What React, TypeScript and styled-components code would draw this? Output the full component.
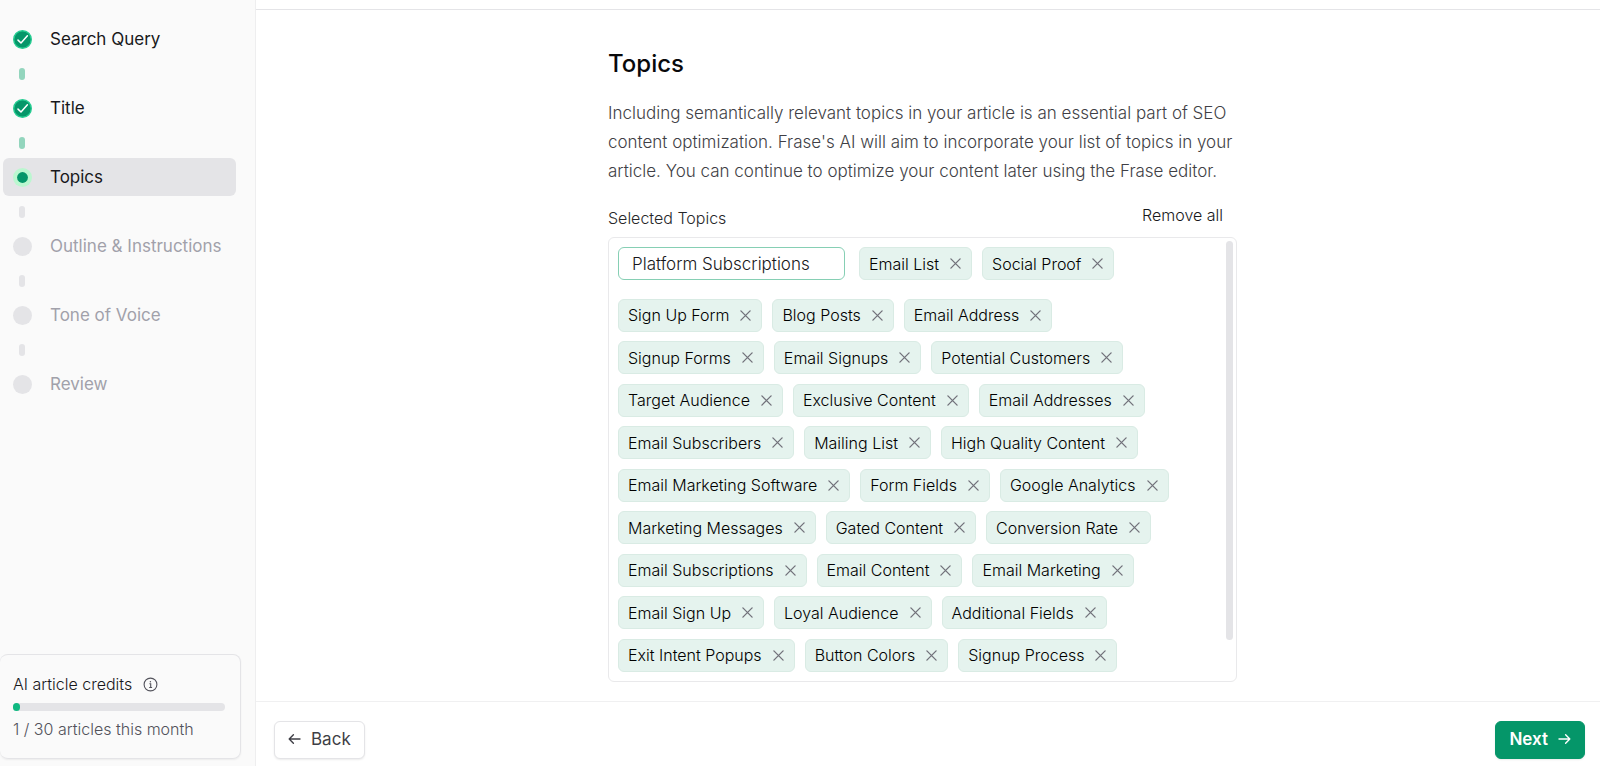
import React from "react";
import styled, { createGlobalStyle } from "styled-components";

const GlobalStyle = createGlobalStyle`
  *, *::before, *::after { box-sizing: border-box; }
  body {
    margin: 0;
    background: #ffffff;
    color: #18181b;
    font-family: Inter, "Liberation Sans", sans-serif;
    font-size: 17px;
    line-height: 24px;
  }
  button, input { font: inherit; color: inherit; }
`;

const Layout = styled.div`
  display: grid;
  grid-template-columns: 256px minmax(0, 1fr);
  min-height: 100vh;
`;

const Sidebar = styled.aside`
  display: flex;
  flex-direction: column;
  justify-content: space-between;
  padding: 20px 14px 7px 0;
  background: #fafafa;
  border-right: 1px solid #eeeeef;
`;

const Steps = styled.ol`
  list-style: none;
  margin: 0;
  padding: 0 5px 0 3px;
`;

type StepState = "done" | "current" | "upcoming";

const Step = styled.li<{ $reached: boolean }>`
  &:not(:first-child)::before {
    content: "";
    display: block;
    width: 6px;
    height: 12px;
    margin: 10px 0 9px 16px;
    border-radius: 3px;
    background: ${(p) => (p.$reached ? "#93d5bd" : "#e4e4e7")};
  }
`;

const StepLink = styled.a<{ $state: StepState }>`
  display: flex;
  align-items: center;
  gap: 18px;
  height: 38px;
  padding-left: 10px;
  border-radius: 6px;
  text-decoration: none;
  color: ${(p) => (p.$state === "upcoming" ? "#a1a1aa" : "#18181b")};
  background: ${(p) => (p.$state === "current" ? "#e4e4e7" : "transparent")};
`;

const StepIcon = styled.svg`
  width: 19px;
  height: 19px;
  flex: none;
`;

const CreditsCard = styled.section`
  padding: 17px 15px 17px 13px;
  border: 1px solid #e4e4e7;
  border-left: 0;
  border-radius: 8px;
  box-shadow: 0 1px 2px rgba(0, 0, 0, 0.06);
  font-size: 16px;
  font-weight: 300;
`;

const CreditsTitle = styled.h2`
  display: flex;
  align-items: center;
  gap: 11px;
  margin: 0;
  font-size: 16px;
  font-weight: 300;
  color: #18181b;
`;

const Track = styled.div`
  height: 8px;
  margin: 7px 0 6px;
  border-radius: 4px;
  background: #e4e4e7;
`;

const TrackFill = styled.div`
  width: 7px;
  height: 8px;
  border-radius: 4px;
  background: #10b981;
`;

const CreditsNote = styled.p`
  margin: 0;
  color: #52525b;
`;

const Main = styled.main`
  display: flex;
  flex-direction: column;
`;

const TopBar = styled.header`
  height: 10px;
  border-bottom: 1px solid #e4e4e7;
`;

const Content = styled.section`
  width: 100%;
  max-width: 629px;
  margin: 0 auto;
  padding-top: 38px;
`;

const ContentArea = styled.div`
  flex: 1;
  padding: 0 11px 19px 0;
`;

const Heading = styled.h1`
  margin: 0;
  font-size: 24px;
  line-height: 32px;
  font-weight: 500;
  color: #09090b;
`;

const Description = styled.p`
  margin: 19px 0 0;
  line-height: 29px;
  font-weight: 300;
  color: #3f3f46;
`;

const ListHeader = styled.div`
  display: flex;
  justify-content: space-between;
  margin-top: 17px;
  padding-right: 14px;
  font-size: 16px;
  line-height: 24px;
  font-weight: 300;
`;

const ListLabel = styled.label`
  padding-top: 3px;
  color: #27272a;
`;

const TextButton = styled.button`
  align-self: flex-start;
  padding: 0;
  border: 0;
  background: none;
  color: #18181b;
`;

const TopicBox = styled.div`
  position: relative;
  height: 445px;
  margin-top: 7px;
  padding: 9px 50px 9px 9px;
  border: 1px solid #e9e9eb;
  border-radius: 6px;
`;

const TopicList = styled.ul`
  display: flex;
  flex-wrap: wrap;
  align-content: space-between;
  column-gap: 10px;
  height: 100%;
  margin: 0;
  padding: 0;
  list-style: none;
`;

const EditingItem = styled.li`
  margin: 0 4px 9px 0;
`;

const TopicInput = styled.input`
  display: block;
  width: 227px;
  height: 33px;
  padding: 0 13px;
  border: 1px solid #86cfb4;
  border-radius: 6px;
  background: #ffffff;
  outline: 0;
  font-weight: 300;
  color: #18181b;
`;

const Chip = styled.li`
  display: flex;
  align-items: center;
  gap: 11px;
  height: 33px;
  padding: 0 10px 0 9px;
  border: 1px solid #d9ebe4;
  border-radius: 6px;
  background: #e5f3ee;
  font-size: 16px;
  font-weight: 300;
  color: #000000;
  white-space: nowrap;
`;

const RemoveButton = styled.button`
  display: flex;
  padding: 0;
  border: 0;
  background: none;
  color: #71717a;
`;

const ScrollThumb = styled.div`
  position: absolute;
  top: 3px;
  right: 3px;
  width: 7px;
  height: 399px;
  border-radius: 4px;
  background: #e4e4e7;
`;

const Footer = styled.footer`
  display: flex;
  justify-content: space-between;
  padding: 19px 15px 7px 18px;
  border-top: 1px solid #f0f0f1;
`;

const NavButton = styled.button<{ $primary?: boolean }>`
  display: flex;
  align-items: center;
  gap: 10px;
  height: 38px;
  padding: 0 13px 2px;
  border: 1px solid ${(p) => (p.$primary ? "#059669" : "#e4e4e7")};
  border-radius: 6px;
  background: ${(p) => (p.$primary ? "#059669" : "#ffffff")};
  color: ${(p) => (p.$primary ? "#ffffff" : "#3f3f46")};
  font-weight: ${(p) => (p.$primary ? 600 : 400)};
  box-shadow: 0 1px 2px rgba(0, 0, 0, 0.08);
`;

const steps: { label: string; state: StepState }[] = [
  { label: "Search Query", state: "done" },
  { label: "Title", state: "done" },
  { label: "Topics", state: "current" },
  { label: "Outline & Instructions", state: "upcoming" },
  { label: "Tone of Voice", state: "upcoming" },
  { label: "Review", state: "upcoming" },
];

const topics = [
  "Email List", "Social Proof",
  "Sign Up Form", "Blog Posts", "Email Address",
  "Signup Forms", "Email Signups", "Potential Customers",
  "Target Audience", "Exclusive Content", "Email Addresses",
  "Email Subscribers", "Mailing List", "High Quality Content",
  "Email Marketing Software", "Form Fields", "Google Analytics",
  "Marketing Messages", "Gated Content", "Conversion Rate",
  "Email Subscriptions", "Email Content", "Email Marketing",
  "Email Sign Up", "Loyal Audience", "Additional Fields",
  "Exit Intent Popups", "Button Colors", "Signup Process",
];

function StepMarker({ state }: { state: StepState }) {
  return (
    <StepIcon viewBox="0 0 19 19" aria-hidden="true">
      {state === "done" && (
        <>
          <circle cx="9.5" cy="9.5" r="8.8" fill="#059669" stroke="#26cd92" strokeWidth="1.4" />
          <path d="M5 10.1 8 13 14.4 5.8" fill="none" stroke="#fff" strokeWidth="1.5" strokeLinecap="round" strokeLinejoin="round" />
        </>
      )}
      {state === "current" && (
        <>
          <circle cx="9.5" cy="9.5" r="9.5" fill="#bbf7d0" />
          <circle cx="9.5" cy="9.5" r="5.4" fill="#059669" />
        </>
      )}
      {state === "upcoming" && <circle cx="9.5" cy="9.5" r="9.5" fill="#e4e4e7" />}
    </StepIcon>
  );
}

function InfoIcon() {
  return (
    <svg width="15" height="15" viewBox="0 0 15 15" fill="none" stroke="#52525b" strokeWidth="1.1" aria-hidden="true">
      <circle cx="7.5" cy="7.5" r="6.4" />
      <path d="M6.4 6.8h1.3v3.6M6.2 10.5h2.9" />
      <circle cx="7.4" cy="4.7" r=".7" fill="#52525b" stroke="none" />
    </svg>
  );
}

function CrossIcon() {
  return (
    <svg width="11" height="11" viewBox="0 0 11 11" fill="none" stroke="currentColor" strokeWidth="1.3" strokeLinecap="round" aria-hidden="true">
      <path d="M.9.9l9.2 9.2M10.1.9.9 10.1" />
    </svg>
  );
}

function ArrowIcon({ left }: { left?: boolean }) {
  return (
    <svg width="13" height="12" viewBox="0 0 13 12" fill="none" stroke="currentColor" strokeWidth="1.4" strokeLinecap="round" strokeLinejoin="round" aria-hidden="true">
      <path d={left ? "M12 6H1.2M5.4 1.8 1.2 6l4.2 4.2" : "M1 6h10.8M7.6 1.8 11.8 6l-4.2 4.2"} />
    </svg>
  );
}

export default function App() {
  return (
    <>
      <GlobalStyle />
      <Layout>
        <Sidebar>
          <nav aria-label="Article steps">
            <Steps>
              {steps.map((step, i) => (
                <Step key={step.label} $reached={step.state !== "upcoming"}>
                  <StepLink href={`#step-${i + 1}`} $state={step.state} aria-current={step.state === "current" ? "step" : undefined}>
                    <StepMarker state={step.state} />
                    {step.label}
                  </StepLink>
                </Step>
              ))}
            </Steps>
          </nav>
          <CreditsCard>
            <CreditsTitle>
              AI article credits <InfoIcon />
            </CreditsTitle>
            <Track>
              <TrackFill />
            </Track>
            <CreditsNote>1 / 30 articles this month</CreditsNote>
          </CreditsCard>
        </Sidebar>
        <Main>
          <TopBar />
          <ContentArea>
            <Content>
              <Heading>Topics</Heading>
              <Description>
                Including semantically relevant topics in your article is an essential part of SEO content optimization. Frase's
                AI will aim to incorporate your list of topics in your article. You can continue to optimize your content later
                using the Frase editor.
              </Description>
              <ListHeader>
                <ListLabel htmlFor="topic">Selected Topics</ListLabel>
                <TextButton type="button">Remove all</TextButton>
              </ListHeader>
              <TopicBox>
                <TopicList>
                  <EditingItem>
                    <TopicInput id="topic" type="text" defaultValue="Platform Subscriptions" />
                  </EditingItem>
                  {topics.map((topic) => (
                    <Chip key={topic}>
                      {topic}
                      <RemoveButton type="button" aria-label={`Remove ${topic}`}>
                        <CrossIcon />
                      </RemoveButton>
                    </Chip>
                  ))}
                </TopicList>
                <ScrollThumb />
              </TopicBox>
            </Content>
          </ContentArea>
          <Footer>
            <NavButton type="button">
              <ArrowIcon left />
              Back
            </NavButton>
            <NavButton type="button" $primary>
              Next
              <ArrowIcon />
            </NavButton>
          </Footer>
        </Main>
      </Layout>
    </>
  );
}
